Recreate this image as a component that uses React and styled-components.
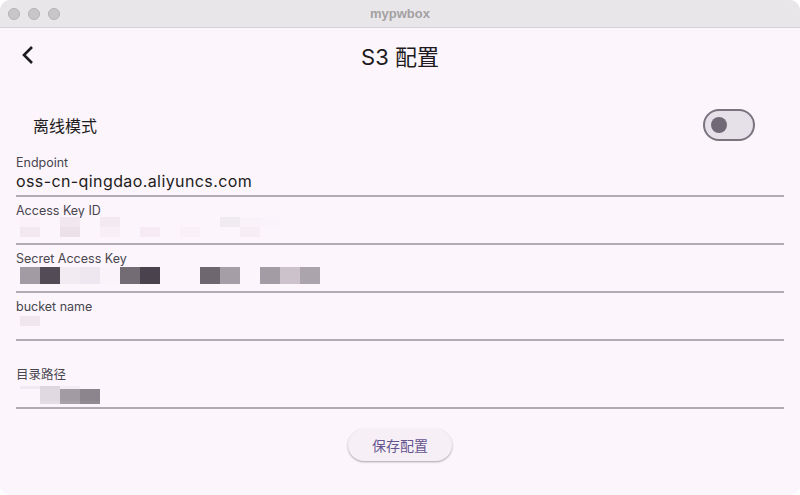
import styled, { createGlobalStyle } from 'styled-components';

const GlobalStyle = createGlobalStyle`
  html, body {
    margin: 0;
    padding: 0;
    background: #ffffff;
  }
  * {
    box-sizing: border-box;
  }
`;

const sans = `Inter, "Noto Sans CJK SC", sans-serif`;

const Window = styled.div`
  width: 800px;
  height: 495px;
  border-radius: 10px;
  overflow: hidden;
  background: #fcf6fc;
  display: flex;
  flex-direction: column;
  font-family: ${sans};
  color: #1d1b20;
`;

const TitleBar = styled.div`
  height: 28px;
  flex: none;
  display: grid;
  grid-template-columns: 80px 1fr 80px;
  align-items: center;
  background: #e8e6e8;
  border-bottom: 1px solid #d6d1d6;
`;

const Lights = styled.div`
  display: flex;
  gap: 8px;
  padding-left: 8px;
`;

const Light = styled.span`
  width: 12px;
  height: 12px;
  border-radius: 50%;
  background: #c8c6c8;
  border: 1px solid #b5b3b5;
`;

const WindowTitle = styled.div`
  text-align: center;
  font-size: 13px;
  font-weight: 700;
  color: #a3a1a3;
  font-family: "Liberation Sans", sans-serif;
`;

const Header = styled.div`
  height: 56px;
  padding-bottom: 3px;
  display: grid;
  grid-template-columns: 64px 1fr 64px;
  align-items: center;
`;

const BackButton = styled.button`
  border: none;
  background: none;
  padding: 0 0 0 20px;
  display: flex;
  align-items: center;
  cursor: pointer;
`;

const PageTitle = styled.h1`
  margin: 0;
  text-align: center;
  font-size: 22px;
  font-weight: 400;
  color: #1d1b20;
`;

const OfflineRow = styled.div`
  margin-top: 17px;
  height: 48px;
  display: flex;
  align-items: center;
  justify-content: space-between;
  padding: 0 45px 0 33px;
  font-size: 16px;
`;

const Switch = styled.div`
  width: 52px;
  height: 32px;
  border-radius: 16px;
  border: 2px solid #79747e;
  background: #e6e0e9;
  display: flex;
  align-items: center;
  padding-left: 6px;
`;

const Thumb = styled.span`
  width: 16px;
  height: 16px;
  border-radius: 50%;
  background: #716a76;
`;

const Form = styled.div`
  padding: 0 16px;
  display: flex;
  flex-direction: column;
`;

const Field = styled.div`
  padding-top: ${({ $top }) => $top || 6}px;
  border-bottom: 2px solid #b2abb4;
  display: flex;
  flex-direction: column;
`;

const Label = styled.div`
  height: 16px;
  line-height: 16px;
  font-size: 12.5px;
  color: #49454f;
`;

const Value = styled.div`
  height: 24px;
  line-height: 20px;
  font-size: 16px;
  letter-spacing: 0.4px;
  color: #1d1b20;
`;

const Mosaic = styled.div`
  display: grid;
  grid-template-columns: repeat(${({ $cols }) => $cols}, 20px);
  grid-auto-rows: ${({ $row }) => $row}px;
  margin: ${({ $offset }) => $offset || 0}px 0 0 4px;
`;

const Tile = styled.span`
  background: ${({ $c }) => $c || 'transparent'};
`;

const Actions = styled.div`
  display: flex;
  justify-content: center;
  margin-top: 20px;
`;

const SaveButton = styled.button`
  height: 32px;
  width: 104px;
  border: none;
  border-radius: 16px;
  background: #f6f0f6;
  box-shadow: 0 1px 2px rgba(0, 0, 0, 0.28), 0 1px 3px rgba(0, 0, 0, 0.08);
  color: #65558f;
  font-family: ${sans};
  font-size: 14px;
  cursor: pointer;
`;

const accessKeyTiles = [
  ['#fbf1f9', null, '#f3e7ef', null, '#f4e9f1', null, null, null, null, null, '#f0ebf0', '#faf2f9', '#fbf3fb'],
  ['#f4e8f0', null, '#ede1e9', null, '#f8eef6', null, '#f6eaf4', null, '#faf0f8', null, null, '#f7edf5', null],
];

const secretTiles = [
  ['#a29ba3', '#534b55', '#f2ecf2', '#efe7ef', '#faf4fa', '#736c75', '#4a424c', null, null, '#6e6770', '#a59ea7', '#fcf6fc', '#a39ca5', '#cbc2cb', '#aba4ad'],
];

const bucketTiles = [['#efe6ee']];

const dirTiles = [
  ['#f1e9f1', '#dcd6de', '#f4eef4', null],
  [null, '#e0d9e1', '#a29ba4', '#8c858e'],
  [null, '#e0d9e1', '#a29ba4', '#8c858e'],
  [null, '#e0d9e1', '#a29ba4', '#8c858e'],
  [null, '#e0d9e1', '#a29ba4', '#8c858e'],
  [null, '#e3dde4', '#a8a1aa', '#928b94'],
];

const MosaicBlock = ({ rows, row, offset }) => (
  <Mosaic $cols={rows[0].length} $row={row} $offset={offset}>
    {rows.flatMap((r, i) => r.map((c, j) => <Tile key={`${i}-${j}`} $c={c} />))}
  </Mosaic>
);

const BackIcon = () => (
  <svg width="16" height="20" viewBox="0 0 16 20">
    <path d="M12 2 L4 10 L12 18" fill="none" stroke="#1d1b20" strokeWidth="2.6" />
  </svg>
);

export default function App() {
  return (
    <>
      <GlobalStyle />
      <Window>
        <TitleBar>
          <Lights>
            <Light />
            <Light />
            <Light />
          </Lights>
          <WindowTitle>mypwbox</WindowTitle>
          <div />
        </TitleBar>

        <Header>
          <BackButton aria-label="返回">
            <BackIcon />
          </BackButton>
          <PageTitle>S3 配置</PageTitle>
          <div />
        </Header>

        <OfflineRow>
          <span>离线模式</span>
          <Switch>
            <Thumb />
          </Switch>
        </OfflineRow>

        <Form>
          <Field>
            <Label>Endpoint</Label>
            <Value>oss-cn-qingdao.aliyuncs.com</Value>
          </Field>
          <Field>
            <Label>Access Key ID</Label>
            <Value>
              <MosaicBlock rows={accessKeyTiles} row={10} offset={-2} />
            </Value>
          </Field>
          <Field>
            <Label>Secret Access Key</Label>
            <Value>
              <MosaicBlock rows={secretTiles} row={17} />
            </Value>
          </Field>
          <Field>
            <Label>bucket name</Label>
            <Value>
              <MosaicBlock rows={bucketTiles} row={10} offset={1} />
            </Value>
          </Field>
          <Field $top={26}>
            <Label>目录路径</Label>
            <Value>
              <MosaicBlock rows={dirTiles} row={3} offset={3} />
            </Value>
          </Field>
        </Form>

        <Actions>
          <SaveButton>保存配置</SaveButton>
        </Actions>
      </Window>
    </>
  );
}
